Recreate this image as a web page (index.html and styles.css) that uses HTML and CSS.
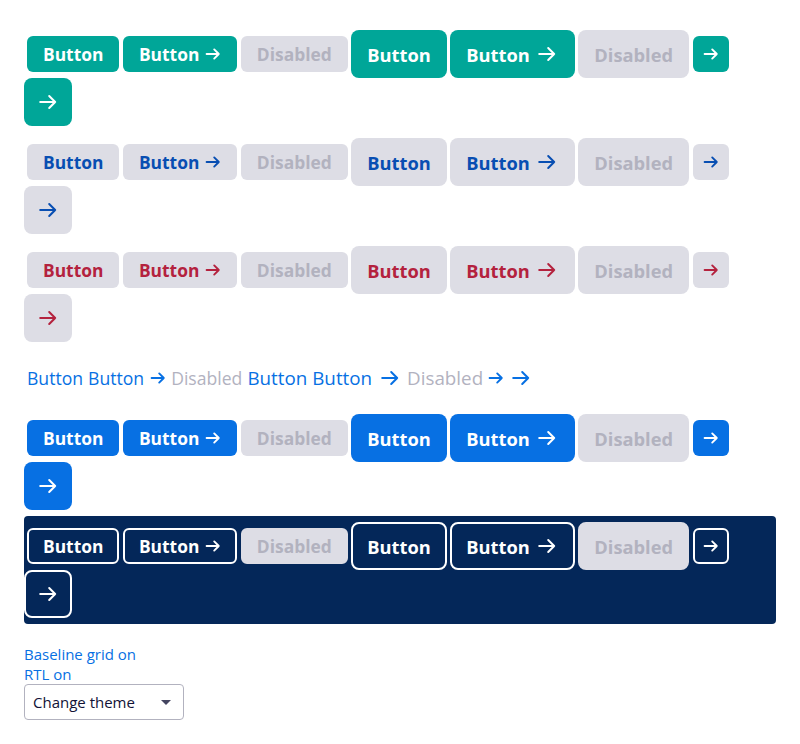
FILE: index.html
```html
<!DOCTYPE html>
<html lang="en">
<head>
<meta charset="utf-8">
<title>Buttons</title>
<link rel="stylesheet" href="styles.css">
</head>
<body>
<svg class="defs" width="0" height="0" aria-hidden="true">
  <symbol id="arr-sm" viewBox="0 0 16 16"><path d="M1.6 8h12.2M9.2 3.4L13.8 8l-4.6 4.6" fill="none" stroke="currentColor" stroke-width="1.9" stroke-linecap="round" stroke-linejoin="round"/></symbol>
  <symbol id="arr-lg" viewBox="0 0 24 24"><path d="M4.2 12h15M13.2 6l6 6-6 6" fill="none" stroke="currentColor" stroke-width="2" stroke-linecap="round" stroke-linejoin="round"/></symbol>
</svg>

<div class="row v-featured">
  <button class="btn sm">Button</button>
  <button class="btn sm">Button<svg class="ic-sm"><use href="#arr-sm"/></svg></button>
  <button class="btn sm disabled">Disabled</button>
  <button class="btn lg">Button</button>
  <button class="btn lg">Button<svg class="ic-lg"><use href="#arr-lg"/></svg></button>
  <button class="btn lg disabled">Disabled</button>
  <button class="btn sm icon"><svg class="ic-sm"><use href="#arr-sm"/></svg></button>
  <button class="btn lg icon"><svg class="ic-lg"><use href="#arr-lg"/></svg></button>
</div>

<div class="row v-secondary">
  <button class="btn sm">Button</button>
  <button class="btn sm">Button<svg class="ic-sm"><use href="#arr-sm"/></svg></button>
  <button class="btn sm disabled">Disabled</button>
  <button class="btn lg">Button</button>
  <button class="btn lg">Button<svg class="ic-lg"><use href="#arr-lg"/></svg></button>
  <button class="btn lg disabled">Disabled</button>
  <button class="btn sm icon"><svg class="ic-sm"><use href="#arr-sm"/></svg></button>
  <button class="btn lg icon"><svg class="ic-lg"><use href="#arr-lg"/></svg></button>
</div>

<div class="row v-destructive">
  <button class="btn sm">Button</button>
  <button class="btn sm">Button<svg class="ic-sm"><use href="#arr-sm"/></svg></button>
  <button class="btn sm disabled">Disabled</button>
  <button class="btn lg">Button</button>
  <button class="btn lg">Button<svg class="ic-lg"><use href="#arr-lg"/></svg></button>
  <button class="btn lg disabled">Disabled</button>
  <button class="btn sm icon"><svg class="ic-sm"><use href="#arr-sm"/></svg></button>
  <button class="btn lg icon"><svg class="ic-lg"><use href="#arr-lg"/></svg></button>
</div>

<div class="row v-link">
  <button class="btn sm">Button</button>
  <button class="btn sm">Button<svg class="ic-sm"><use href="#arr-sm"/></svg></button>
  <button class="btn sm disabled">Disabled</button>
  <button class="btn lg">Button</button>
  <button class="btn lg">Button<svg class="ic-lg"><use href="#arr-lg"/></svg></button>
  <button class="btn lg disabled">Disabled</button>
  <button class="btn sm icon"><svg class="ic-sm"><use href="#arr-sm"/></svg></button>
  <button class="btn lg icon"><svg class="ic-lg"><use href="#arr-lg"/></svg></button>
</div>

<div class="row v-primary">
  <button class="btn sm">Button</button>
  <button class="btn sm">Button<svg class="ic-sm"><use href="#arr-sm"/></svg></button>
  <button class="btn sm disabled">Disabled</button>
  <button class="btn lg">Button</button>
  <button class="btn lg">Button<svg class="ic-lg"><use href="#arr-lg"/></svg></button>
  <button class="btn lg disabled">Disabled</button>
  <button class="btn sm icon"><svg class="ic-sm"><use href="#arr-sm"/></svg></button>
  <button class="btn lg icon"><svg class="ic-lg"><use href="#arr-lg"/></svg></button>
</div>

<div class="row v-outline">
  <button class="btn sm">Button</button>
  <button class="btn sm">Button<svg class="ic-sm"><use href="#arr-sm"/></svg></button>
  <button class="btn sm disabled">Disabled</button>
  <button class="btn lg">Button</button>
  <button class="btn lg">Button<svg class="ic-lg"><use href="#arr-lg"/></svg></button>
  <button class="btn lg disabled">Disabled</button>
  <button class="btn sm icon"><svg class="ic-sm"><use href="#arr-sm"/></svg></button>
  <button class="btn lg icon"><svg class="ic-lg"><use href="#arr-lg"/></svg></button>
</div>

<div class="controls">
  <a class="toggle" href="#">Baseline grid on</a>
  <a class="toggle" href="#">RTL on</a>
  <div class="select">
    <span>Change theme</span>
    <span class="caret"></span>
  </div>
</div>
</body>
</html>
```

FILE: styles.css
```css
* { box-sizing: border-box; }

html, body { background: #ffffff; }

body {
  margin: 0;
  padding: 24px;
  font-family: "Open Sans", "Noto Sans", sans-serif;
  color: #111236;
}

.defs { position: absolute; width: 0; height: 0; overflow: hidden; }

.row {
  display: flex;
  flex-wrap: wrap;
  align-items: center;
  column-gap: 3.5px;
  padding: 6px 0;
}

.row > :first-child { margin-left: 3px; }

.btn {
  display: inline-flex;
  align-items: center;
  justify-content: center;
  margin: 0;
  border: 0;
  font-family: inherit;
  font-weight: 700;
  cursor: pointer;
  white-space: nowrap;
}

.btn.sm {
  height: 36px;
  padding: 0 16px;
  border-radius: 6px;
  font-size: 17.4px;
  gap: 6px;
}

.btn.lg {
  height: 48px;
  padding: 0 16px;
  border-radius: 8px;
  font-size: 18.3px;
  gap: 5px;
}

.btn.sm.icon { width: 36px; padding: 0; }
.btn.lg.icon { width: 48px; padding: 0; }

.ic-sm { width: 16px; height: 16px; flex: none; }
.ic-lg { width: 24px; height: 24px; flex: none; }

.btn.disabled {
  background: #dddde5;
  color: #b2b2bf;
}

/* featured */
.v-featured .btn { background: #00a698; color: #ffffff; }
.v-featured .btn.disabled { background: #dddde5; color: #b2b2bf; }

/* secondary */
.v-secondary .btn { background: #dddde5; color: #084eb2; }
.v-secondary .btn.disabled { color: #b2b2bf; }

/* destructive */
.v-destructive .btn { background: #dddde5; color: #b4223e; }
.v-destructive .btn.disabled { color: #b2b2bf; }

/* link */
.v-link { column-gap: 5px; }
.v-link .btn {
  background: transparent;
  color: #0770e3;
  font-weight: 400;
  padding: 0;
  gap: 6px;
}
.v-link .btn.sm { font-size: 17.6px; }
.v-link .btn.lg { font-size: 18.8px; }
.v-link .btn.icon { width: auto; }
.v-link .btn.disabled { color: #b2b2bf; }

/* primary */
.v-primary .btn { background: #0770e3; color: #ffffff; }
.v-primary .btn.disabled { background: #dddde5; color: #b2b2bf; }

/* outline on dark */
.v-outline {
  background: #042759;
  border-radius: 4px;
}
.v-outline .btn {
  background: transparent;
  color: #ffffff;
  border: 2px solid #ffffff;
}
.v-outline .btn.sm { padding: 0 14px; }
.v-outline .btn.lg { padding: 0 14px; }
.v-outline .btn.icon { padding: 0; }
.v-outline .btn.disabled {
  background: #dddde5;
  color: #b2b2bf;
  border-color: #dddde5;
}

.controls {
  margin-top: 20px;
  display: flex;
  flex-direction: column;
  align-items: flex-start;
}

.toggle {
  font-size: 15px;
  line-height: 20px;
  color: #0770e3;
  text-decoration: none;
}

.select {
  width: 160px;
  height: 36px;
  border: 1px solid #b2b2bf;
  border-radius: 4px;
  display: flex;
  align-items: center;
  justify-content: space-between;
  padding: 0 12px 0 8px;
  font-size: 15px;
  color: #111236;
}

.caret {
  width: 0;
  height: 0;
  border-left: 5px solid transparent;
  border-right: 5px solid transparent;
  border-top: 5px solid #444560;
}
```
